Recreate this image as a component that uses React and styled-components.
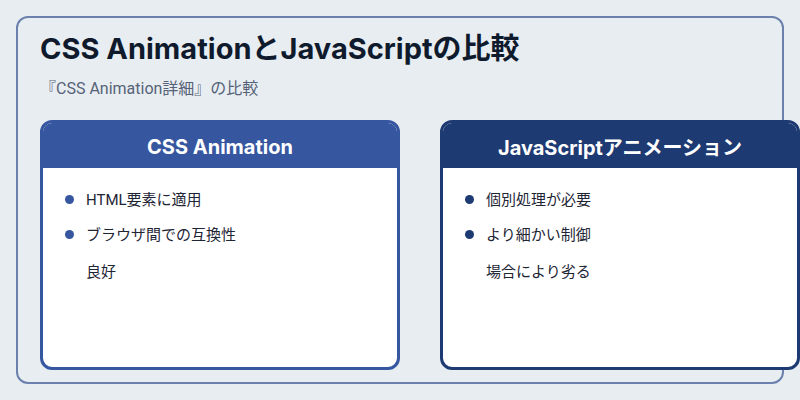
import React from 'react';
import styled, { createGlobalStyle } from 'styled-components';

const GlobalStyle = createGlobalStyle`
  html, body { margin: 0; padding: 0; background: #e8edf2; overflow: hidden; }
  body { font-family: Roboto, "Noto Sans CJK JP", sans-serif; }
`;

const Page = styled.div`
  width: 800px;
  height: 400px;
  padding: 16px;
  box-sizing: border-box;
`;

const Frame = styled.div`
  height: 368px;
  box-sizing: border-box;
  border: 2px solid #6b81ad;
  border-radius: 12px;
  padding: 12px 0 0 22px;
`;

const Title = styled.h1`
  margin: 0;
  font-size: 29px;
  line-height: 38px;
  font-weight: 700;
  color: #0f1b2d;
  font-family: Inter, "Noto Sans CJK JP", sans-serif;
`;

const Subtitle = styled.div`
  margin-top: 10px;
  font-size: 16px;
  line-height: 22px;
  color: #566277;
`;

const Columns = styled.div`
  display: grid;
  grid-template-columns: 360px 360px;
  gap: 40px;
  margin-top: 20px;
`;

const Card = styled.div`
  height: 250px;
  box-sizing: border-box;
  border: 3px solid ${p => p.$color};
  border-radius: 12px;
  background: #fff;
  overflow: hidden;
`;

const CardHeader = styled.div`
  background: ${p => p.$color};
  color: #fff;
  height: 43px;
  display: flex;
  align-items: center;
  justify-content: center;
  font-family: Inter, "Noto Sans CJK JP", sans-serif;
  font-size: 20px;
  font-weight: 700;
  padding-top: 2px;
`;

const List = styled.ul`
  list-style: none;
  margin: 0;
  padding: 25px 0 0 22px;
  display: flex;
  flex-direction: column;
  gap: 20px;
`;

const Item = styled.li`
  display: flex;
  gap: 12px;
  font-size: 15px;
  color: #1e2535;
  line-height: 1;
  &::before {
    content: '';
    flex: none;
    width: 9px;
    height: 9px;
    border-radius: 50%;
    margin-top: 2px;
    background: ${p => p.$color};
  }
`;

const Lines = styled.div`
  display: flex;
  flex-direction: column;
  gap: 22px;
`;

const cards = [
  { title: 'CSS Animation', color: '#3656a0', items: [['HTML要素に適用'], ['ブラウザ間での互換性', '良好']] },
  { title: 'JavaScriptアニメーション', color: '#1e3a72', items: [['個別処理が必要'], ['より細かい制御', '場合により劣る']] },
];

export default function App() {
  return (
    <Page>
      <GlobalStyle />
      <Frame>
        <Title>CSS AnimationとJavaScriptの比較</Title>
        <Subtitle>『CSS Animation詳細』の比較</Subtitle>
        <Columns>
          {cards.map(c => (
            <Card key={c.title} $color={c.color}>
              <CardHeader $color={c.color}>{c.title}</CardHeader>
              <List>
                {c.items.map(lines => (
                  <Item key={lines[0]} $color={c.color}>
                    <Lines>{lines.map(l => <span key={l}>{l}</span>)}</Lines>
                  </Item>
                ))}
              </List>
            </Card>
          ))}
        </Columns>
      </Frame>
    </Page>
  );
}
